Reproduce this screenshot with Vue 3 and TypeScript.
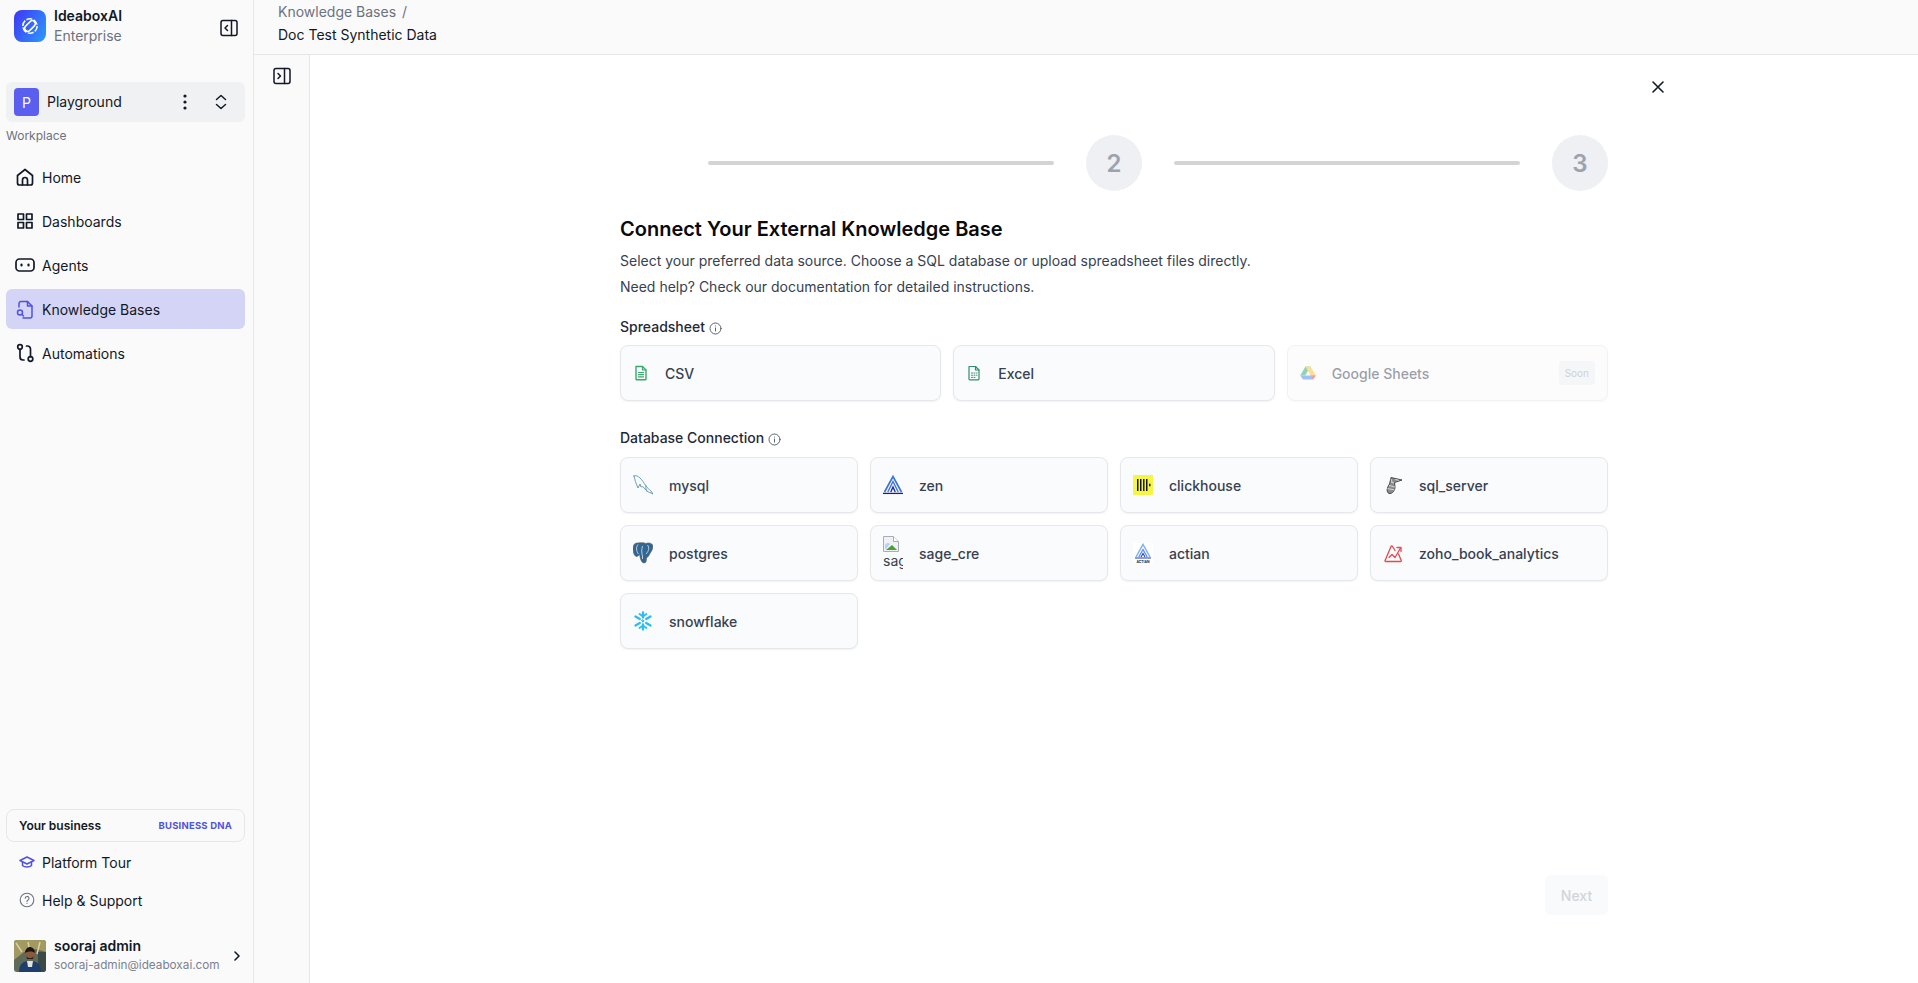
<script setup lang="ts">
interface NavItem { key: string; label: string; active?: boolean }
interface Source { key: string; label: string }

const navItems: NavItem[] = [
  { key: 'home', label: 'Home' },
  { key: 'dash', label: 'Dashboards' },
  { key: 'agent', label: 'Agents' },
  { key: 'kb', label: 'Knowledge Bases', active: true },
  { key: 'auto', label: 'Automations' },
]

const databases: Source[] = [
  { key: 'mysql', label: 'mysql' },
  { key: 'zen', label: 'zen' },
  { key: 'clickhouse', label: 'clickhouse' },
  { key: 'sql_server', label: 'sql_server' },
  { key: 'postgres', label: 'postgres' },
  { key: 'sage_cre', label: 'sage_cre' },
  { key: 'actian', label: 'actian' },
  { key: 'zoho', label: 'zoho_book_analytics' },
  { key: 'snowflake', label: 'snowflake' },
]
</script>

<template>
  <div class="app">
    <aside class="sidebar">
      <div class="brand">
        <div class="brand-logo">
          <svg width="20" height="20" viewBox="0 0 20 20" fill="none" stroke="#fff" stroke-width="1.500">
            <circle cx="10" cy="10" r="7.200" stroke-dasharray="6 1.500" />
            <rect x="3.800" y="7" width="12.400" height="6" rx="3" transform="rotate(-45 10 10)" />
          </svg>
        </div>
        <div class="brand-text">
          <div class="brand-name">IdeaboxAI</div>
          <div class="brand-plan">Enterprise</div>
        </div>
        <svg class="panel-icon" width="18" height="18" viewBox="0 0 18 18" fill="none" stroke="#111827" stroke-width="1.500">
          <rect x="1" y="1.500" width="16" height="15" rx="2" />
          <path d="M11.500 1.500v15M7.500 6.500 5 9l2.500 2.500" stroke-linecap="round" stroke-linejoin="round" />
        </svg>
      </div>

      <div class="workspace">
        <div class="workspace-badge">P</div>
        <span class="workspace-name">Playground</span>
        <svg class="workspace-dots" width="4" height="16" viewBox="0 0 4 16" fill="#111827">
          <circle cx="2" cy="2" r="1.600" />
          <circle cx="2" cy="8" r="1.600" />
          <circle cx="2" cy="14" r="1.600" />
        </svg>
        <svg class="workspace-chev" width="12" height="16" viewBox="0 0 12 16" fill="none" stroke="#111827" stroke-width="1.500" stroke-linecap="round" stroke-linejoin="round">
          <path d="M1.500 5.500 6 1.500l4.500 4M1.500 10.500l4.500 4 4.500-4" />
        </svg>
      </div>
      <div class="section-label">Workplace</div>

      <nav class="nav">
        <a v-for="item in navItems" :key="item.key" class="nav-item" :class="{ active: item.active }">
          <svg width="20" height="20" viewBox="0 0 20 20" fill="none" stroke="#111827" stroke-width="1.700" stroke-linecap="round" stroke-linejoin="round">
            <template v-if="item.key === 'home'">
              <path d="M2.500 8.500 10 2.500l7.500 6v7.500a2 2 0 0 1-2 2h-11a2 2 0 0 1-2-2z" />
              <path d="M7.500 18v-5a2.500 2.500 0 0 1 5 0v5" />
            </template>
            <template v-else-if="item.key === 'dash'">
              <rect x="3" y="3" width="5.500" height="5.500" />
              <rect x="11.500" y="3" width="5.500" height="5.500" />
              <rect x="3" y="11.500" width="5.500" height="5.500" />
              <rect x="11.500" y="11.500" width="5.500" height="5.500" />
            </template>
            <template v-else-if="item.key === 'agent'">
              <rect x="1" y="4" width="18" height="12" rx="3.500" />
              <path d="M6.500 9.500v1M13.500 9.500v1" stroke-width="2.200" />
            </template>
            <template v-else-if="item.key === 'kb'">
              <g stroke="#4f52e0" stroke-width="1.500">
                <path d="M4 8V4.500a2 2 0 0 1 2-2h6.500l4.500 4.500v10a2 2 0 0 1-2 2H8" />
                <path d="M12.500 2.500V7H17" />
                <circle cx="5" cy="13.500" r="2.500" />
                <path d="m7 15.500 1.500 1.500" />
              </g>
            </template>
            <template v-else>
              <circle cx="5" cy="4" r="2.300" />
              <circle cx="15.500" cy="16" r="2.300" />
              <path d="M5 6.300V14a3 3 0 0 0 3 3h1M15.500 13.700V6a3 3 0 0 0-3-3h-1" />
            </template>
          </svg>
          <span>{{ item.label }}</span>
        </a>
      </nav>

      <div class="sidebar-bottom">
        <div class="dna-card">
          <span class="dna-title">Your business</span>
          <span class="dna-link">BUSINESS DNA</span>
        </div>
        <a class="foot-link">
          <svg width="16" height="16" viewBox="0 0 16 16" fill="none" stroke="#4f52e0" stroke-width="1.500" stroke-linejoin="round">
            <path d="M8 3 1 6.500 8 10l7-3.500z" />
            <path d="M3.500 8v3.500c1 1 2.800 1.500 4.500 1.500s3.500-.5 4.500-1.500V8" />
          </svg>
          <span>Platform Tour</span>
        </a>
        <a class="foot-link">
          <svg width="16" height="16" viewBox="0 0 16 16" fill="none" stroke="#6b7280" stroke-width="1.100" stroke-linecap="round">
            <circle cx="8" cy="8" r="6.800" />
            <path d="M6.200 6.300a1.900 1.900 0 1 1 2.800 1.700c-.6.300-1 .7-1 1.400M8 11.400v.1" />
          </svg>
          <span>Help &amp; Support</span>
        </a>
        <div class="user">
          <svg class="avatar" width="32" height="32" viewBox="0 0 32 32">
            <rect width="32" height="32" fill="#5d6b58" />
            <path d="M0 0h32v12L22 9 10 12 0 20z" fill="#a39a63" />
            <path d="M2 3l6 9M26 2l-3 12M14 2l1 5" stroke="#d9d3a0" stroke-width="1.500" />
            <rect x="24" y="12" width="8" height="20" fill="#3b4a45" />
            <path d="M5 32c0-8 4-11 11-11s11 3 11 11z" fill="#1e3f6e" />
            <path d="M13 21h6l-1 6h-4z" fill="#e4e2dc" />
            <circle cx="16" cy="14" r="5" fill="#8a5a3e" />
            <path d="M11 13c0-4 3-6 5-6s5 2 5 6c-2-2-7-2-10 0z" fill="#20160f" />
            <path d="M12.500 16c1 3 6 3 7 0l-.5 3h-6z" fill="#2a1a12" />
          </svg>
          <div class="user-text">
            <div class="user-name">sooraj admin</div>
            <div class="user-mail">sooraj-admin@ideaboxai.com</div>
          </div>
          <svg class="user-chev" width="8" height="12" viewBox="0 0 8 12" fill="none" stroke="#111827" stroke-width="1.600" stroke-linecap="round" stroke-linejoin="round">
            <path d="m2 2 4 4-4 4" />
          </svg>
        </div>
      </div>
    </aside>

    <div class="content">
      <header class="topbar">
        <div class="crumb">Knowledge Bases <span class="crumb-sep">/</span></div>
        <div class="crumb-current">Doc Test Synthetic Data</div>
      </header>

      <div class="body">
        <div class="rail">
          <svg width="18" height="18" viewBox="0 0 18 18" fill="none" stroke="#111827" stroke-width="1.500">
            <rect x="1" y="1.500" width="16" height="15" rx="2" />
            <path d="M11.500 1.500v15M5 6.500 7.500 9 5 11.500" stroke-linecap="round" stroke-linejoin="round" />
          </svg>
        </div>

        <main class="main">
          <button class="close" aria-label="Close">
            <svg width="14" height="14" viewBox="0 0 14 14" fill="none" stroke="#111827" stroke-width="1.600" stroke-linecap="round">
              <path d="m2 2 10 10M12 2 2 12" />
            </svg>
          </button>

          <div class="wizard">
            <div class="stepper">
              <div class="step step-done"></div>
              <div class="step-line"></div>
              <div class="step">2</div>
              <div class="step-line"></div>
              <div class="step">3</div>
            </div>

            <h1 class="title">Connect Your External Knowledge Base</h1>
            <p class="desc">Select your preferred data source. Choose a SQL database or upload spreadsheet files directly.</p>
            <p class="desc">Need help? Check our documentation for detailed instructions.</p>

            <div class="group-label">
              Spreadsheet
              <svg class="info" width="13" height="13" viewBox="0 0 13 13" fill="none" stroke="#4b5563" stroke-width=".9" stroke-linecap="round">
                <circle cx="6.500" cy="6.500" r="5.500" />
                <path d="M6.500 6v3M6.500 4v.1" />
              </svg>
            </div>
            <div class="grid grid-3">
              <div class="card">
                <svg width="16" height="16" viewBox="0 0 16 16" fill="none" stroke="#3aa76d" stroke-width="1.400" stroke-linejoin="round" stroke-linecap="round">
                  <path d="M3 1.500h6.500L13 5v9a.8.8 0 0 1-.8.800H3.800A.8.8 0 0 1 3 14z" />
                  <path d="M9.500 1.500V5H13M5.500 7.500h5M5.500 9.700h5M5.500 11.900h5" stroke-width="1.200" />
                </svg>
                <span>CSV</span>
              </div>
              <div class="card">
                <svg width="16" height="16" viewBox="0 0 16 16" fill="none" stroke="#2f8f6b" stroke-width="1.200" stroke-linejoin="round" stroke-linecap="round">
                  <path d="M3 1.500h6.500L13 5v9a.8.8 0 0 1-.8.800H3.800A.8.8 0 0 1 3 14z" />
                  <path d="M9.500 1.500V5H13" />
                  <path d="M5.500 8h1M8 8h1M10.500 8h.5M5.500 10.200h1M8 10.200h1M10.500 10.200h.5M5.500 12.400h1M8 12.400h1" stroke-width="1" />
                </svg>
                <span>Excel</span>
              </div>
              <div class="card card-off">
                <svg width="16" height="16" viewBox="0 0 16 16">
                  <path d="M5.500 1.500h5L5.300 10.500H.2z" fill="#2ea567" />
                  <path d="M10.500 1.500 15.800 10.500h-5.200L5.500 1.500z" fill="#fbc02d" />
                  <path d="M3 14.500.2 10.500h15.600L13 14.500z" fill="#4285f4" />
                  <path d="M10.600 10.500h5.200L13 14.500z" fill="#ea4335" />
                </svg>
                <span>Google Sheets</span>
                <span class="soon">Soon</span>
              </div>
            </div>

            <div class="group-label group-db">
              Database Connection
              <svg class="info" width="13" height="13" viewBox="0 0 13 13" fill="none" stroke="#4b5563" stroke-width=".9" stroke-linecap="round">
                <circle cx="6.500" cy="6.500" r="5.500" />
                <path d="M6.500 6v3M6.500 4v.1" />
              </svg>
            </div>
            <div class="grid grid-4">
              <div v-for="db in databases" :key="db.key" class="card">
                <div class="db-icon">
                  <svg v-if="db.key === 'mysql'" width="20" height="20" viewBox="0 0 20 20" fill="none" stroke="#4f86a8" stroke-width=".8" stroke-linejoin="round" stroke-linecap="round">
                    <path d="M1 1C3 0 5 1 7 3c2 2 4 5 6 8 1 2 3 3 5 5l2 3-3-1.500c-2-.5-4-1.500-5-3.500-1-2-3-3-4-2L7 9l-2 4-2-5C2 6 2 4 1 1z" />
                    <path d="M13 11c-.5 2 0 3.500 1 5" />
                  </svg>
                  <svg v-else-if="db.key === 'zen'" width="20" height="20" viewBox="0 0 20 20" fill="none">
                    <path d="M1.500 17 10 1.500 18.500 17" stroke="#3b76d9" stroke-width="1.700" />
                    <path d="M4.800 17 10 6.500 15.200 17" stroke="#3f6fe0" stroke-width="1.400" />
                    <path d="M7.800 17 10 12l2.200 5" stroke="#1a2a9c" stroke-width="1.400" />
                    <path d="M0 18.400h20" stroke="#15208a" stroke-width="1.300" />
                  </svg>
                  <svg v-else-if="db.key === 'clickhouse'" width="20" height="20" viewBox="0 0 20 20">
                    <rect width="20" height="20" rx="1" fill="#f5f547" />
                    <path d="M4 4h1.500v12H4zM7 4h1.500v12H7zM10 4h1.500v12H10zM13 4h1.500v12H13zM16 8.700h1.500v2.600H16z" fill="#161616" />
                  </svg>
                  <svg v-else-if="db.key === 'sql_server'" width="20" height="20" viewBox="0 0 20 20" fill="none">
                    <path d="M6 18.500C3 17 4 12.500 6.500 9L8 2.500 19 5l-7.500 2.500.5 4.500c0 3.500-2.500 7-6 6.500z" fill="#8c8c8c" stroke="#3d3d3d" stroke-width=".9" />
                    <path d="M4.500 13.500l7 1.500M6 10.500l6 1.500M8 7l3 1M8 4l1 3M12 4.500l4 .8" stroke="#e8e8e8" stroke-width=".8" />
                  </svg>
                  <svg v-else-if="db.key === 'postgres'" width="20" height="22" viewBox="0 0 20 22">
                    <path d="M4 1C1 1 0 4 0 7c0 4 2 8 4 7.500 1.500-.5 2-1.500 2.500-2.500.5 3 1.500 9 4.500 9 2 0 2.500-2 2.500-5 1.500-1 2.500-2.500 3.500-4.500 2-2.500 3-5.500 3-7.500 0-2-3-3.500-5.500-3-1 .5-2 .5-3 0-2-.5-4.500-.5-7 0z" fill="#336791" stroke="#5a5f66" stroke-width=".6" />
                    <path d="M5 2.500C3 5 3 9 5.500 12M9.500 4c-1 3-1 7 0 10v3M14.500 3c2 2.500 1.500 6-1.500 9" fill="none" stroke="#dce7ef" stroke-width=".8" />
                  </svg>
                  <div v-else-if="db.key === 'sage_cre'" class="broken">
                    <svg width="16" height="16" viewBox="0 0 16 16">
                      <path d="M.5.5h10l5 5v10H.5z" fill="#eef1f5" stroke="#a8adb3" stroke-width="1" />
                      <path d="M10.500.5v5h5" fill="#fff" stroke="#a8adb3" stroke-width="1" />
                      <path d="M2 9c2-3 4-2 5-1l-4 5H2z" fill="#b9d2ef" />
                      <path d="M3 14l6-5 5 5z" fill="#4ea02f" />
                    </svg>
                    <span>{{ db.label }}</span>
                  </div>
                  <svg v-else-if="db.key === 'actian'" width="20" height="20" viewBox="0 0 20 20" fill="none">
                    <rect width="20" height="20" fill="#fff" />
                    <path d="M3 14 10 1.500 17 14" stroke="#7cb0f7" stroke-width="1.500" />
                    <path d="M5.800 14 10 6.500 14.200 14" stroke="#5a8cf0" stroke-width="1.300" />
                    <path d="M8 14 10 10.500 12 14" stroke="#2f49c9" stroke-width="1.200" />
                    <path d="M2 15h16" stroke="#2a3bb0" stroke-width="1" />
                    <text x="10" y="19.500" text-anchor="middle" class="actian-mark">ACTIAN</text>
                  </svg>
                  <svg v-else-if="db.key === 'zoho'" width="20" height="20" viewBox="0 0 20 20" fill="none" stroke="#e5484d" stroke-width="1.300" stroke-linejoin="round" stroke-linecap="round">
                    <path d="M12 7.500 9.500 3.500c-.5-.7-1-.7-1.500 0L2.200 17.200c-.6.800 0 1.300.6 1.300h14.600c.8 0 1.200-.6.800-1.300L15.500 11" />
                    <path d="M6 14.500l3-3 3 3 5.500-9.500" />
                    <path d="M14 4.500h4v4" />
                  </svg>
                  <svg v-else-if="db.key === 'snowflake'" width="20" height="20" viewBox="0 0 20 20" fill="none" stroke="#2bbcf0" stroke-width="2.300" stroke-linecap="round">
                    <path d="M10 1.500v5M10 13.500v5M2.500 5.500 6.800 8M13.200 12l4.300 2.500M2.500 14.500 6.800 12M13.200 8l4.300-2.500" />
                    <path d="M6.500 3 10 5.500 13.500 3M6.500 17 10 14.500 13.500 17" stroke-width="1.800" />
                    <path d="M10 8.800 11.200 10 10 11.200 8.800 10z" fill="#2bbcf0" stroke-width="1" />
                  </svg>
                </div>
                <span>{{ db.label }}</span>
              </div>
            </div>

            <div class="actions">
              <button class="next" disabled>Next</button>
            </div>
          </div>
        </main>
      </div>
    </div>
  </div>
</template>

<style>
html, body {
  margin: 0;
  height: 100%;
  overflow: hidden;
  background: #fff;
}
</style>

<style scoped>
* {
  box-sizing: border-box;
}

.app {
  display: flex;
  width: 100%;
  height: 100vh;
  font-family: Inter, "Liberation Sans", sans-serif;
  font-size: 14px;
  color: #111827;
}

/* sidebar */
.sidebar {
  display: flex;
  flex-direction: column;
  flex: 0 0 254px;
  padding: 0 8px 0 6px;
  background: #fafafa;
  border-right: 1px solid #e5e7eb;
}

.brand {
  display: flex;
  align-items: center;
  height: 52px;
  padding-left: 8px;
}

.brand-logo {
  display: flex;
  align-items: center;
  justify-content: center;
  width: 32px;
  height: 32px;
  margin-right: 8px;
  border-radius: 8px;
  background: linear-gradient(120deg, #3f35f5 0%, #2a9cfb 100%);
}

.brand-name {
  font-weight: 600;
  line-height: 20px;
}

.brand-plan {
  line-height: 20px;
  color: #6b7280;
}

.panel-icon {
  margin-left: auto;
  margin-right: 7px;
  margin-top: 4px;
}

.workspace {
  display: flex;
  align-items: center;
  height: 40px;
  margin-top: 30px;
  padding: 0 8px;
  border-radius: 6px;
  background: #f0f1f3;
}

.workspace-badge {
  display: flex;
  align-items: center;
  justify-content: center;
  width: 25px;
  height: 28px;
  border-radius: 4px;
  background: #5a5ff0;
  color: #fff;
}

.workspace-name {
  margin-left: 8px;
  margin-bottom: 2px;
}

.workspace-dots {
  margin-left: auto;
  margin-right: -1px;
}

.workspace-chev {
  margin-left: 29px;
  margin-right: 10px;
}

.section-label {
  margin-top: 6px;
  font-size: 12px;
  line-height: 16px;
  color: #6b7280;
}

.nav {
  display: flex;
  flex-direction: column;
  gap: 4px;
  margin-top: 13px;
}

.nav-item {
  display: flex;
  align-items: center;
  gap: 7px;
  height: 40px;
  padding-left: 9px;
  border-radius: 6px;
}

.nav-item.active {
  background: #d4d5f6;
}

.sidebar-bottom {
  margin-top: auto;
  padding-bottom: 9px;
}

.dna-card {
  display: flex;
  align-items: center;
  justify-content: space-between;
  height: 33px;
  padding: 0 12px;
  border: 1px solid #e5e7eb;
  border-radius: 8px;
  background: #fafafa;
}

.dna-title {
  font-size: 12px;
  font-weight: 600;
}

.dna-link {
  font-size: 9.500px;
  font-weight: 700;
  letter-spacing: .2px;
  color: #4f52e0;
}

.foot-link {
  display: flex;
  align-items: center;
  gap: 7px;
  height: 38px;
  padding-left: 13px;
}

.dna-card + .foot-link {
  margin-top: 1px;
}

.user {
  display: flex;
  align-items: center;
  margin-top: 18px;
  padding-left: 8px;
}

.avatar {
  flex: none;
  border-radius: 3px;
}

.user-text {
  margin-left: 8px;
}

.user-name {
  font-weight: 600;
  line-height: 18px;
}

.user-mail {
  margin-top: 1px;
  font-size: 11.750px;
  line-height: 18px;
  color: #7b8190;
}

.user-chev {
  margin-left: auto;
  margin-right: 4px;
}

/* top bar */
.content {
  display: flex;
  flex-direction: column;
  flex: 1;
  min-width: 0;
}

.topbar {
  flex: 0 0 55px;
  padding: 2px 24px 0;
  background: #fafafa;
  border-bottom: 1px solid #e5e7eb;
}

.crumb {
  line-height: 20px;
  color: #6b7280;
}

.crumb-sep {
  margin-left: 2px;
}

.crumb-current {
  margin-top: 3px;
  line-height: 20px;
}

.body {
  display: flex;
  flex: 1;
  min-height: 0;
}

.rail {
  flex: 0 0 56px;
  padding: 12px 0 0 19px;
  background: #fafafa;
  border-right: 1px solid #e5e7eb;
}

.main {
  position: relative;
  flex: 1;
  display: flex;
  justify-content: center;
  background: #fff;
}

.close {
  position: absolute;
  top: 25px;
  left: 1341px;
  padding: 0;
  border: 0;
  background: none;
  line-height: 0;
}

.wizard {
  display: flex;
  flex-direction: column;
  width: 988px;
  padding: 80px 0 68px;
}

.stepper {
  display: flex;
  align-items: center;
}

.step {
  display: flex;
  align-items: center;
  justify-content: center;
  flex: 0 0 56px;
  height: 56px;
  border-radius: 50%;
  background: #eef0f3;
  font-size: 24px;
  font-weight: 600;
  color: #9ca3af;
}

.step-done {
  background: transparent;
}

.step-line {
  flex: 1;
  height: 4px;
  margin: 0 32px;
  border-radius: 2px;
  background: #d4d4d4;
}

.title {
  margin: 24px 0 0;
  font-size: 20px;
  font-weight: 600;
  line-height: 28px;
  color: #0a0a0a;
}

.desc {
  margin: 8px 0 0;
  line-height: 18px;
  color: #374151;
}

.title + .desc {
  margin-top: 9px;
}

.group-label {
  display: flex;
  align-items: center;
  gap: 4px;
  margin-top: 21px;
  font-weight: 500;
  line-height: 20px;
  color: #1f2937;
}

.group-db {
  margin-top: 27px;
}

.info {
  margin-top: 2px;
}

.grid {
  display: grid;
  gap: 12px;
  margin-top: 8px;
}

.grid-3 {
  grid-template-columns: repeat(3, 1fr);
}

.grid-4 {
  grid-template-columns: repeat(4, 1fr);
  margin-top: 9px;
}

.card {
  display: flex;
  align-items: center;
  gap: 16px;
  height: 56px;
  padding: 0 12px;
  border: 1px solid #e5e7eb;
  border-radius: 8px;
  background: #fafbfc;
  box-shadow: 0 1px 2px rgba(0, 0, 0, .05);
  font-weight: 500;
  color: #374151;
}

.card-off {
  opacity: .5;
}

.soon {
  display: flex;
  align-items: center;
  margin-left: auto;
  height: 24px;
  padding: 0 6px;
  border-radius: 4px;
  background: #eceef1;
  font-size: 10px;
  font-weight: 400;
  color: #9ca3af;
}

.db-icon {
  display: flex;
  align-items: center;
  justify-content: center;
  flex: 0 0 20px;
  height: 34px;
}

.actian-mark {
  font-size: 3.400px;
  font-weight: 700;
  fill: #1c2230;
}

.broken {
  width: 20px;
  height: 34px;
  overflow: hidden;
  font-weight: 400;
  line-height: 17px;
}

.broken svg {
  display: block;
}

.broken span {
  display: block;
  width: 60px;
}

.actions {
  display: flex;
  justify-content: flex-end;
  margin-top: auto;
}

.next {
  width: 63px;
  height: 40px;
  border: 0;
  border-radius: 6px;
  background: #f9fafb;
  font-family: inherit;
  font-size: 14px;
  font-weight: 500;
  color: #d1d5db;
}
</style>
